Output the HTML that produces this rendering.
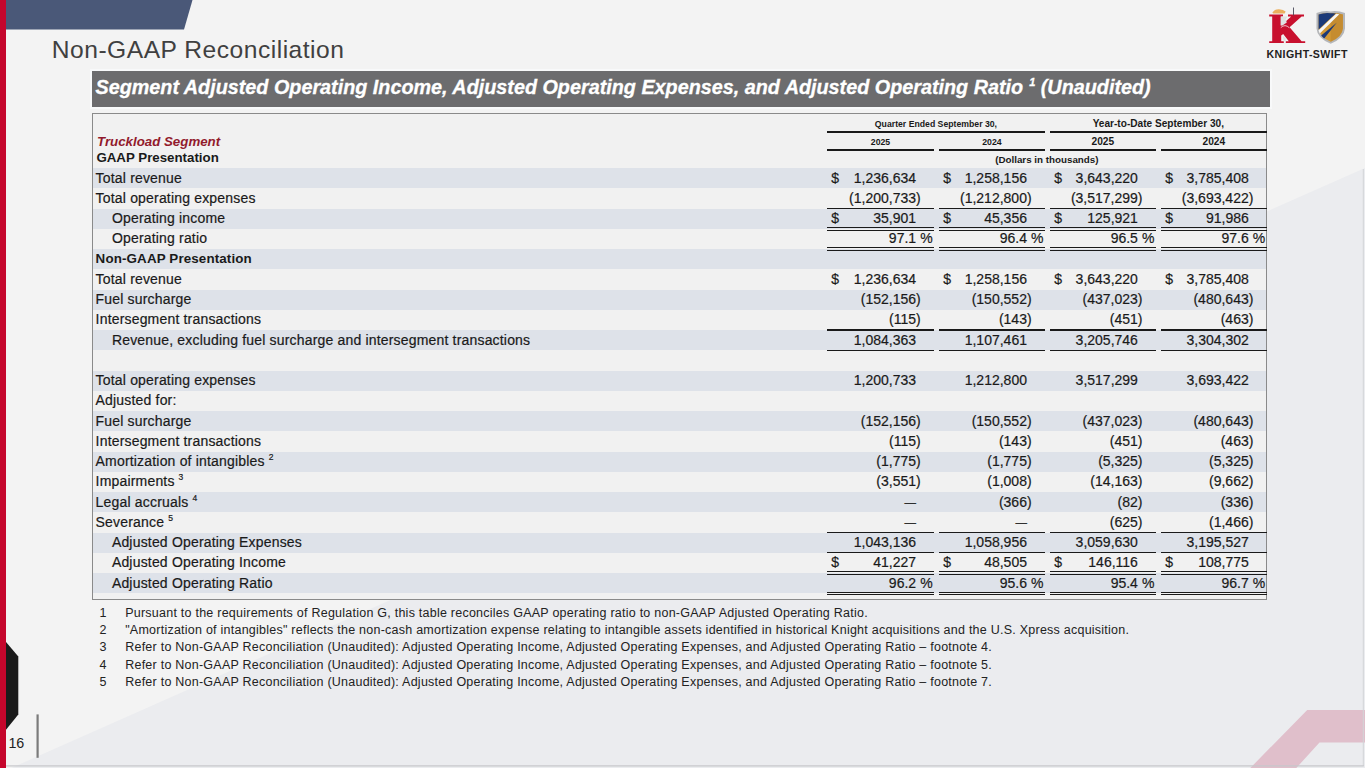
<!DOCTYPE html>
<html><head><meta charset="utf-8"><title>Non-GAAP Reconciliation</title>
<style>
html,body{margin:0;padding:0;}
body{width:1365px;height:768px;overflow:hidden;position:relative;background:#f3f3f3;font-family:"Liberation Sans",sans-serif;color:#1a1a1a;}
.a{position:absolute;white-space:pre;line-height:1;}
.t{font-size:14px;letter-spacing:0.18px;-webkit-text-stroke:0.2px #1a1a1a;}
.n{font-size:14px;text-align:right;-webkit-text-stroke:0.2px #1a1a1a;}
.ln{position:absolute;height:1.4px;background:#1a1a1a;}
.band{position:absolute;left:93px;width:1172.6px;background:#dee2e9;}
.fn{font-size:12.5px;letter-spacing:0.24px;color:#222;}
</style></head><body>

<svg class="a" style="left:0;top:0" width="1365" height="768" viewBox="0 0 1365 768"><polygon points="0,773 1365,168 1365,768 0,768" fill="#ebecef"/><polygon points="1250.3,768 1307.2,709.9 1365,709.9 1365,742.5 1319.5,742.5 1296.3,768" fill="#e0bfcb"/><rect x="1362.8" y="169" width="1" height="597" fill="#d3d4d7"/><rect x="0" y="765.3" width="1363.8" height="1.2" fill="#c6c7ca"/><rect x="0" y="0" width="6" height="768" fill="#c5062c"/><polygon points="6,0 192.5,0 184,29.4 6,29.4" fill="#4a5878"/><polygon points="6,642 18.3,656.5 18.3,714.4 6,729.8" fill="#1b1b1b"/><rect x="36.5" y="714.4" width="2.2" height="43.4" fill="#7b7b7b"/></svg>
<div class="a" style="left:8.4px;top:736.2px;font-size:14.3px;color:#222">16</div>
<div class="a" style="left:51.8px;top:38.3px;font-size:24.6px;letter-spacing:0.5px;color:#404040">Non-GAAP Reconciliation</div>
<div class="a" style="left:91.7px;top:71.1px;width:1178.5px;height:36.3px;background:#6c6c6e;box-shadow:0 0 0 2px #f8f9fa"></div>
<div class="a" style="left:95.5px;top:77.6px;font-size:19.8px;font-weight:bold;font-style:italic;color:#fff;-webkit-text-stroke:0.3px #fff">Segment Adjusted Operating Income, Adjusted Operating Expenses, and Adjusted Operating Ratio<span style="font-size:11px;position:relative;top:-8px;margin-left:6px">1</span> (Unaudited)</div>
<svg class="a" style="left:1260px;top:0" width="100" height="65" viewBox="0 0 100 65">
<path d="M9.2,14.6 H23 V16.4 H21.2 V25.5 L31.2,16.4 H28 V14.6 H44 V16.4 H41.6 L29.6,27.2 L41.6,41.2 H45.2 V43.1 H25.8 V41.2 H28.8 L23.2,34 L21.2,35.6 V41.2 H23.8 V43.1 H9.2 V41.2 H12.2 V16.4 H9.2 Z" fill="#c8102e"/>
<path d="M20.6,16.4 H27.6 L25.6,19.6 L26.8,22.4 L22.4,25.6 H20.6 Z" fill="#dfe2e2"/>
<path d="M20.8,27.6 Q25,23.6 29.4,27.8" stroke="#f0d0d6" stroke-width="0.9" fill="none"/>
<path d="M22.8,35.4 L25.4,38.2 L25.8,41.2 H23.6 Z" fill="#dfe2e2"/>
<path d="M12.4,12.6 Q14.5,9 19,9.2 Q23.5,9.4 25.6,11.6 L24.6,13.6 H13.2 Z" fill="#eaa94e" opacity="0.9"/>
<rect x="33" y="7.5" width="0.9" height="8" fill="#4a4a5a"/>
<path d="M56.5,13 q7,-2.6 14.2,-1.6 q7.2,-1 14.3,1.6 v15.5 q-0.8,9.8 -14.3,15.2 q-13.5,-5.4 -14.2,-15.2z" fill="#b4b6b9"/>
<path d="M58.6,14.6 q6,-2.1 12.1,-1.3 q6.1,-0.8 12.2,1.3 v14 q-0.8,8.4 -12.2,13.2 q-11.4,-4.8 -12.1,-13.2z" fill="#d49a35"/>
<path d="M70.7,13.3 q6.1,-0.8 12.2,1.3 v14 q-0.8,8.4 -12.2,13.2z" fill="#b8822c" opacity="0.55"/>
<path d="M58.6,14.6 q6,-2.1 12.1,-1.3 q2.5,-0.3 5,0.1 l-17.1,16.2z" fill="#1c3a78"/>
<path d="M58.6,30.2 l17.5,-16.5 l3.2,0.5 l-19.5,19.3 q-0.8,-1.6 -1.2,-3.3z" fill="#f6f6f6"/>
<path d="M61.2,35.4 l15.5,-12.6 l-12.5,15.6 q-1.8,-1.4 -3,-3z" fill="#1c3a78"/>
</svg>
<div class="a" style="left:1266.5px;top:49.3px;font-size:10.6px;font-weight:bold;letter-spacing:0.4px;color:#222">KNIGHT-SWIFT</div>
<div class="a" style="left:92px;top:113px;width:1172.6px;height:484.7px;border:1px solid #8a8a8a;background:#f1f1f1"></div>
<div class="band" style="top:168.2px;height:20.25px"></div>
<div class="band" style="top:208.7px;height:20.25px"></div>
<div class="band" style="top:249.2px;height:20.25px"></div>
<div class="band" style="top:289.7px;height:20.25px"></div>
<div class="band" style="top:330.2px;height:20.25px"></div>
<div class="band" style="top:370.7px;height:20.25px"></div>
<div class="band" style="top:411.2px;height:20.25px"></div>
<div class="band" style="top:451.7px;height:20.25px"></div>
<div class="band" style="top:492.2px;height:20.25px"></div>
<div class="band" style="top:532.7px;height:20.25px"></div>
<div class="band" style="top:573.2px;height:20.25px"></div>
<div class="a" style="left:97px;top:135.2px;font-size:13.3px;font-weight:bold;font-style:italic;color:#921a2c">Truckload Segment</div>
<div class="a" style="left:96.4px;top:151px;font-size:13.3px;font-weight:bold">GAAP Presentation</div>
<div class="a" style="left:827.1px;width:217.7px;text-align:center;top:120px;font-size:8.7px;font-weight:bold">Quarter Ended September 30,</div>
<div class="a" style="left:1050.05px;width:216.55px;text-align:center;top:118.6px;font-size:10.1px;font-weight:bold">Year-to-Date September 30,</div>
<div class="ln" style="left:827.1px;width:217.7px;top:130.85px;height:1.8px"></div>
<div class="ln" style="left:1050.05px;width:216.55px;top:130.85px;height:1.8px"></div>
<div class="a" style="left:827.1px;width:106.8px;text-align:center;top:138.4px;font-size:8.7px;font-weight:bold">2025</div>
<div class="ln" style="left:827.1px;width:106.8px;top:149.0px;height:1.6px"></div>
<div class="a" style="left:939.1px;width:105.7px;text-align:center;top:138.4px;font-size:8.7px;font-weight:bold">2024</div>
<div class="ln" style="left:939.1px;width:105.7px;top:149.0px;height:1.6px"></div>
<div class="a" style="left:1050.05px;width:105.65px;text-align:center;top:137.4px;font-size:10.2px;font-weight:bold">2025</div>
<div class="ln" style="left:1050.05px;width:105.65px;top:149.0px;height:1.6px"></div>
<div class="a" style="left:1161.1px;width:105.5px;text-align:center;top:137.4px;font-size:10.2px;font-weight:bold">2024</div>
<div class="ln" style="left:1161.1px;width:105.5px;top:149.0px;height:1.6px"></div>
<div class="a" style="left:827.1px;width:439.5px;text-align:center;top:154.6px;font-size:9.8px;font-weight:bold">(Dollars in thousands)</div>
<div class="a t" style="left:95.6px;top:170.7px;">Total revenue</div>
<div class="a n" style="left:831.3px;top:170.7px">$</div>
<div class="a n" style="left:827.1px;width:89px;top:170.7px">1,236,634</div>
<div class="a n" style="left:943.3px;top:170.7px">$</div>
<div class="a n" style="left:939.1px;width:87.9px;top:170.7px">1,258,156</div>
<div class="a n" style="left:1054.25px;top:170.7px">$</div>
<div class="a n" style="left:1050.05px;width:87.85px;top:170.7px">3,643,220</div>
<div class="a n" style="left:1165.3px;top:170.7px">$</div>
<div class="a n" style="left:1161.1px;width:87.7px;top:170.7px">3,785,408</div>
<div class="a t" style="left:95.6px;top:190.95px;">Total operating expenses</div>
<div class="a n" style="left:827.1px;width:93.6px;top:190.95px">(1,200,733)</div>
<div class="a n" style="left:939.1px;width:92.5px;top:190.95px">(1,212,800)</div>
<div class="a n" style="left:1050.05px;width:92.45px;top:190.95px">(3,517,299)</div>
<div class="a n" style="left:1161.1px;width:92.3px;top:190.95px">(3,693,422)</div>
<div class="ln" style="left:827.1px;width:106.8px;top:207.75px;height:1.3px"></div>
<div class="ln" style="left:939.1px;width:105.7px;top:207.75px;height:1.3px"></div>
<div class="ln" style="left:1050.05px;width:105.65px;top:207.75px;height:1.3px"></div>
<div class="ln" style="left:1161.1px;width:105.5px;top:207.75px;height:1.3px"></div>
<div class="a t" style="left:111.9px;top:211.2px;">Operating income</div>
<div class="a n" style="left:831.3px;top:211.2px">$</div>
<div class="a n" style="left:827.1px;width:89px;top:211.2px">35,901</div>
<div class="a n" style="left:943.3px;top:211.2px">$</div>
<div class="a n" style="left:939.1px;width:87.9px;top:211.2px">45,356</div>
<div class="a n" style="left:1054.25px;top:211.2px">$</div>
<div class="a n" style="left:1050.05px;width:87.85px;top:211.2px">125,921</div>
<div class="a n" style="left:1165.3px;top:211.2px">$</div>
<div class="a n" style="left:1161.1px;width:87.7px;top:211.2px">91,986</div>
<div class="ln" style="left:827.1px;width:106.8px;top:227.05px;height:1.1px"></div>
<div class="ln" style="left:827.1px;width:106.8px;top:229.7px;height:1.1px"></div>
<div class="ln" style="left:939.1px;width:105.7px;top:227.05px;height:1.1px"></div>
<div class="ln" style="left:939.1px;width:105.7px;top:229.7px;height:1.1px"></div>
<div class="ln" style="left:1050.05px;width:105.65px;top:227.05px;height:1.1px"></div>
<div class="ln" style="left:1050.05px;width:105.65px;top:229.7px;height:1.1px"></div>
<div class="ln" style="left:1161.1px;width:105.5px;top:227.05px;height:1.1px"></div>
<div class="ln" style="left:1161.1px;width:105.5px;top:229.7px;height:1.1px"></div>
<div class="a t" style="left:111.9px;top:231.45px;">Operating ratio</div>
<div class="a n" style="left:827.1px;width:89px;top:231.45px">97.1</div>
<div class="a n" style="left:827.1px;width:105.5px;top:231.45px">%</div>
<div class="a n" style="left:939.1px;width:87.9px;top:231.45px">96.4</div>
<div class="a n" style="left:939.1px;width:104.4px;top:231.45px">%</div>
<div class="a n" style="left:1050.05px;width:87.85px;top:231.45px">96.5</div>
<div class="a n" style="left:1050.05px;width:104.35px;top:231.45px">%</div>
<div class="a n" style="left:1161.1px;width:87.7px;top:231.45px">97.6</div>
<div class="a n" style="left:1161.1px;width:104.2px;top:231.45px">%</div>
<div class="ln" style="left:827.1px;width:106.8px;top:247.3px;height:1.1px"></div>
<div class="ln" style="left:827.1px;width:106.8px;top:249.95px;height:1.1px"></div>
<div class="ln" style="left:939.1px;width:105.7px;top:247.3px;height:1.1px"></div>
<div class="ln" style="left:939.1px;width:105.7px;top:249.95px;height:1.1px"></div>
<div class="ln" style="left:1050.05px;width:105.65px;top:247.3px;height:1.1px"></div>
<div class="ln" style="left:1050.05px;width:105.65px;top:249.95px;height:1.1px"></div>
<div class="ln" style="left:1161.1px;width:105.5px;top:247.3px;height:1.1px"></div>
<div class="ln" style="left:1161.1px;width:105.5px;top:249.95px;height:1.1px"></div>
<div class="a t" style="left:95.6px;top:251.7px;font-weight:bold;font-size:13.4px;letter-spacing:0.12px;-webkit-text-stroke:0;">Non-GAAP Presentation</div>
<div class="a t" style="left:95.6px;top:271.95px;">Total revenue</div>
<div class="a n" style="left:831.3px;top:271.95px">$</div>
<div class="a n" style="left:827.1px;width:89px;top:271.95px">1,236,634</div>
<div class="a n" style="left:943.3px;top:271.95px">$</div>
<div class="a n" style="left:939.1px;width:87.9px;top:271.95px">1,258,156</div>
<div class="a n" style="left:1054.25px;top:271.95px">$</div>
<div class="a n" style="left:1050.05px;width:87.85px;top:271.95px">3,643,220</div>
<div class="a n" style="left:1165.3px;top:271.95px">$</div>
<div class="a n" style="left:1161.1px;width:87.7px;top:271.95px">3,785,408</div>
<div class="a t" style="left:95.6px;top:292.2px;">Fuel surcharge</div>
<div class="a n" style="left:827.1px;width:93.6px;top:292.2px">(152,156)</div>
<div class="a n" style="left:939.1px;width:92.5px;top:292.2px">(150,552)</div>
<div class="a n" style="left:1050.05px;width:92.45px;top:292.2px">(437,023)</div>
<div class="a n" style="left:1161.1px;width:92.3px;top:292.2px">(480,643)</div>
<div class="a t" style="left:95.6px;top:312.45px;">Intersegment transactions</div>
<div class="a n" style="left:827.1px;width:93.6px;top:312.45px">(115)</div>
<div class="a n" style="left:939.1px;width:92.5px;top:312.45px">(143)</div>
<div class="a n" style="left:1050.05px;width:92.45px;top:312.45px">(451)</div>
<div class="a n" style="left:1161.1px;width:92.3px;top:312.45px">(463)</div>
<div class="ln" style="left:827.1px;width:106.8px;top:329.25px;height:1.3px"></div>
<div class="ln" style="left:939.1px;width:105.7px;top:329.25px;height:1.3px"></div>
<div class="ln" style="left:1050.05px;width:105.65px;top:329.25px;height:1.3px"></div>
<div class="ln" style="left:1161.1px;width:105.5px;top:329.25px;height:1.3px"></div>
<div class="a t" style="left:111.9px;top:332.7px;">Revenue, excluding fuel surcharge and intersegment transactions</div>
<div class="a n" style="left:827.1px;width:89px;top:332.7px">1,084,363</div>
<div class="a n" style="left:939.1px;width:87.9px;top:332.7px">1,107,461</div>
<div class="a n" style="left:1050.05px;width:87.85px;top:332.7px">3,205,746</div>
<div class="a n" style="left:1161.1px;width:87.7px;top:332.7px">3,304,302</div>
<div class="ln" style="left:827.1px;width:106.8px;top:349.5px;height:1.3px"></div>
<div class="ln" style="left:939.1px;width:105.7px;top:349.5px;height:1.3px"></div>
<div class="ln" style="left:1050.05px;width:105.65px;top:349.5px;height:1.3px"></div>
<div class="ln" style="left:1161.1px;width:105.5px;top:349.5px;height:1.3px"></div>
<div class="a t" style="left:95.6px;top:373.2px;">Total operating expenses</div>
<div class="a n" style="left:827.1px;width:89px;top:373.2px">1,200,733</div>
<div class="a n" style="left:939.1px;width:87.9px;top:373.2px">1,212,800</div>
<div class="a n" style="left:1050.05px;width:87.85px;top:373.2px">3,517,299</div>
<div class="a n" style="left:1161.1px;width:87.7px;top:373.2px">3,693,422</div>
<div class="a t" style="left:95.6px;top:393.45px;">Adjusted for:</div>
<div class="a t" style="left:95.6px;top:413.7px;">Fuel surcharge</div>
<div class="a n" style="left:827.1px;width:93.6px;top:413.7px">(152,156)</div>
<div class="a n" style="left:939.1px;width:92.5px;top:413.7px">(150,552)</div>
<div class="a n" style="left:1050.05px;width:92.45px;top:413.7px">(437,023)</div>
<div class="a n" style="left:1161.1px;width:92.3px;top:413.7px">(480,643)</div>
<div class="a t" style="left:95.6px;top:433.95px;">Intersegment transactions</div>
<div class="a n" style="left:827.1px;width:93.6px;top:433.95px">(115)</div>
<div class="a n" style="left:939.1px;width:92.5px;top:433.95px">(143)</div>
<div class="a n" style="left:1050.05px;width:92.45px;top:433.95px">(451)</div>
<div class="a n" style="left:1161.1px;width:92.3px;top:433.95px">(463)</div>
<div class="a t" style="left:95.6px;top:454.2px;">Amortization of intangibles<span style="font-size:8.5px;position:relative;top:-6px;margin-left:4px">2</span></div>
<div class="a n" style="left:827.1px;width:93.6px;top:454.2px">(1,775)</div>
<div class="a n" style="left:939.1px;width:92.5px;top:454.2px">(1,775)</div>
<div class="a n" style="left:1050.05px;width:92.45px;top:454.2px">(5,325)</div>
<div class="a n" style="left:1161.1px;width:92.3px;top:454.2px">(5,325)</div>
<div class="a t" style="left:95.6px;top:474.45px;">Impairments<span style="font-size:8.5px;position:relative;top:-6px;margin-left:4px">3</span></div>
<div class="a n" style="left:827.1px;width:93.6px;top:474.45px">(3,551)</div>
<div class="a n" style="left:939.1px;width:92.5px;top:474.45px">(1,008)</div>
<div class="a n" style="left:1050.05px;width:92.45px;top:474.45px">(14,163)</div>
<div class="a n" style="left:1161.1px;width:92.3px;top:474.45px">(9,662)</div>
<div class="a t" style="left:95.6px;top:494.7px;">Legal accruals<span style="font-size:8.5px;position:relative;top:-6px;margin-left:4px">4</span></div>
<div class="a n" style="left:827.1px;width:89px;top:494.7px"><span style="font-size:11.5px;position:relative;top:-1.2px">—</span></div>
<div class="a n" style="left:939.1px;width:92.5px;top:494.7px">(366)</div>
<div class="a n" style="left:1050.05px;width:92.45px;top:494.7px">(82)</div>
<div class="a n" style="left:1161.1px;width:92.3px;top:494.7px">(336)</div>
<div class="a t" style="left:95.6px;top:514.95px;">Severance<span style="font-size:8.5px;position:relative;top:-6px;margin-left:4px">5</span></div>
<div class="a n" style="left:827.1px;width:89px;top:514.95px"><span style="font-size:11.5px;position:relative;top:-1.2px">—</span></div>
<div class="a n" style="left:939.1px;width:87.9px;top:514.95px"><span style="font-size:11.5px;position:relative;top:-1.2px">—</span></div>
<div class="a n" style="left:1050.05px;width:92.45px;top:514.95px">(625)</div>
<div class="a n" style="left:1161.1px;width:92.3px;top:514.95px">(1,466)</div>
<div class="ln" style="left:827.1px;width:106.8px;top:531.75px;height:1.3px"></div>
<div class="ln" style="left:939.1px;width:105.7px;top:531.75px;height:1.3px"></div>
<div class="ln" style="left:1050.05px;width:105.65px;top:531.75px;height:1.3px"></div>
<div class="ln" style="left:1161.1px;width:105.5px;top:531.75px;height:1.3px"></div>
<div class="a t" style="left:111.9px;top:535.2px;">Adjusted Operating Expenses</div>
<div class="a n" style="left:827.1px;width:89px;top:535.2px">1,043,136</div>
<div class="a n" style="left:939.1px;width:87.9px;top:535.2px">1,058,956</div>
<div class="a n" style="left:1050.05px;width:87.85px;top:535.2px">3,059,630</div>
<div class="a n" style="left:1161.1px;width:87.7px;top:535.2px">3,195,527</div>
<div class="ln" style="left:827.1px;width:106.8px;top:552px;height:1.3px"></div>
<div class="ln" style="left:939.1px;width:105.7px;top:552px;height:1.3px"></div>
<div class="ln" style="left:1050.05px;width:105.65px;top:552px;height:1.3px"></div>
<div class="ln" style="left:1161.1px;width:105.5px;top:552px;height:1.3px"></div>
<div class="a t" style="left:111.9px;top:555.45px;">Adjusted Operating Income</div>
<div class="a n" style="left:831.3px;top:555.45px">$</div>
<div class="a n" style="left:827.1px;width:89px;top:555.45px">41,227</div>
<div class="a n" style="left:943.3px;top:555.45px">$</div>
<div class="a n" style="left:939.1px;width:87.9px;top:555.45px">48,505</div>
<div class="a n" style="left:1054.25px;top:555.45px">$</div>
<div class="a n" style="left:1050.05px;width:87.85px;top:555.45px">146,116</div>
<div class="a n" style="left:1165.3px;top:555.45px">$</div>
<div class="a n" style="left:1161.1px;width:87.7px;top:555.45px">108,775</div>
<div class="ln" style="left:827.1px;width:106.8px;top:571.3px;height:1.1px"></div>
<div class="ln" style="left:827.1px;width:106.8px;top:573.95px;height:1.1px"></div>
<div class="ln" style="left:939.1px;width:105.7px;top:571.3px;height:1.1px"></div>
<div class="ln" style="left:939.1px;width:105.7px;top:573.95px;height:1.1px"></div>
<div class="ln" style="left:1050.05px;width:105.65px;top:571.3px;height:1.1px"></div>
<div class="ln" style="left:1050.05px;width:105.65px;top:573.95px;height:1.1px"></div>
<div class="ln" style="left:1161.1px;width:105.5px;top:571.3px;height:1.1px"></div>
<div class="ln" style="left:1161.1px;width:105.5px;top:573.95px;height:1.1px"></div>
<div class="a t" style="left:111.9px;top:575.7px;">Adjusted Operating Ratio</div>
<div class="a n" style="left:827.1px;width:89px;top:575.7px">96.2</div>
<div class="a n" style="left:827.1px;width:105.5px;top:575.7px">%</div>
<div class="a n" style="left:939.1px;width:87.9px;top:575.7px">95.6</div>
<div class="a n" style="left:939.1px;width:104.4px;top:575.7px">%</div>
<div class="a n" style="left:1050.05px;width:87.85px;top:575.7px">95.4</div>
<div class="a n" style="left:1050.05px;width:104.35px;top:575.7px">%</div>
<div class="a n" style="left:1161.1px;width:87.7px;top:575.7px">96.7</div>
<div class="a n" style="left:1161.1px;width:104.2px;top:575.7px">%</div>
<div class="ln" style="left:827.1px;width:106.8px;top:591.55px;height:1.1px"></div>
<div class="ln" style="left:827.1px;width:106.8px;top:594.2px;height:1.1px"></div>
<div class="ln" style="left:939.1px;width:105.7px;top:591.55px;height:1.1px"></div>
<div class="ln" style="left:939.1px;width:105.7px;top:594.2px;height:1.1px"></div>
<div class="ln" style="left:1050.05px;width:105.65px;top:591.55px;height:1.1px"></div>
<div class="ln" style="left:1050.05px;width:105.65px;top:594.2px;height:1.1px"></div>
<div class="ln" style="left:1161.1px;width:105.5px;top:591.55px;height:1.1px"></div>
<div class="ln" style="left:1161.1px;width:105.5px;top:594.2px;height:1.1px"></div>
<div class="a fn" style="left:99.5px;top:606.5px">1</div>
<div class="a fn" style="left:125.2px;top:606.5px">Pursuant to the requirements of Regulation G, this table reconciles GAAP operating ratio to non-GAAP Adjusted Operating Ratio.</div>
<div class="a fn" style="left:99.5px;top:623.95px">2</div>
<div class="a fn" style="left:125.2px;top:623.95px">"Amortization of intangibles" reflects the non-cash amortization expense relating to intangible assets identified in historical Knight acquisitions and the U.S. Xpress acquisition.</div>
<div class="a fn" style="left:99.5px;top:641.4px">3</div>
<div class="a fn" style="left:125.2px;top:641.4px">Refer to Non-GAAP Reconciliation (Unaudited): Adjusted Operating Income, Adjusted Operating Expenses, and Adjusted Operating Ratio – footnote 4.</div>
<div class="a fn" style="left:99.5px;top:658.85px">4</div>
<div class="a fn" style="left:125.2px;top:658.85px">Refer to Non-GAAP Reconciliation (Unaudited): Adjusted Operating Income, Adjusted Operating Expenses, and Adjusted Operating Ratio – footnote 5.</div>
<div class="a fn" style="left:99.5px;top:676.3px">5</div>
<div class="a fn" style="left:125.2px;top:676.3px">Refer to Non-GAAP Reconciliation (Unaudited): Adjusted Operating Income, Adjusted Operating Expenses, and Adjusted Operating Ratio – footnote 7.</div>
</body></html>
